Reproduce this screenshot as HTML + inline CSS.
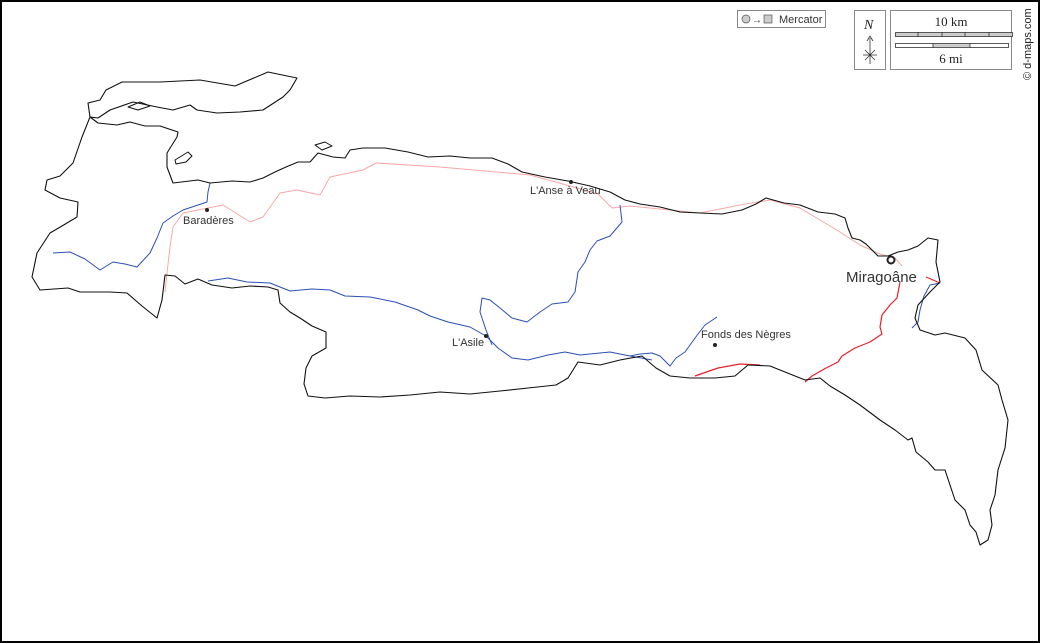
<!DOCTYPE html>
<html><head><meta charset="utf-8"><style>
html,body{margin:0;padding:0;background:#fff}
.f{position:relative;width:1036px;height:639px;border:2px solid #000;overflow:hidden;font-family:"Liberation Sans",sans-serif}
svg{position:absolute;left:-2px;top:-2px}
</style></head><body><div class="f">
<svg width="1040" height="643" viewBox="0 0 1040 643" xmlns="http://www.w3.org/2000/svg">
<g fill="none" stroke-linejoin="round">
<!-- pink road -->
<path stroke="#f8a8a8" stroke-width="1" d="M165,292 L167,273 L170,247 L173,227 L183,213 L213,207 L223,205 L250,222 L263,217 L280,193 L297,190 L320,195 L330,177 L363,170 L376,163 L440,167 L530,175 L570,186 L598,194 L612,208 L630,206 L660,209 L700,213 L740,205 L770,200 L800,208 L820,220 L840,232 L860,245 L880,254 L895,258 L902,266"/>
<!-- red road -->
<path stroke="#e8202a" stroke-width="1.2" d="M940,283 L926,277 M900,282 L897,298 L890,305 L882,315 L880,327 L882,334 L870,342 L855,348 L842,356 L838,362 L826,368 L812,376 L805,382 M695,376 L718,368 L740,364 L760,365"/>
<!-- rivers -->
<path stroke="#2b4fb8" stroke-width="1" d="M53,253 L70,252 L85,259 L100,270 L113,262 L125,264 L137,267 L150,253 L157,238 L163,223 L173,216 L183,210 L198,205 L207,202 L208,192 L210,183"/>
<path stroke="#2b4fb8" stroke-width="1" d="M208,281 L228,278 L247,282 L270,283 L290,291 L312,289 L330,290 L345,296 L370,297 L395,302 L418,310 L430,316 L448,322 L470,327 L486,336 L498,348 L512,358 L528,360 L548,355 L565,352 L580,355 L610,352 L630,356 L652,360"/>
<path stroke="#2b4fb8" stroke-width="1" d="M620,205 L622,222 L610,236 L597,241 L590,250 L585,262 L578,272 L575,292 L568,302 L552,304 L540,312 L527,322 L512,318 L500,308 L490,300 L482,298 L480,312 L486,330 L492,345"/>
<path stroke="#2b4fb8" stroke-width="1" d="M717,317 L705,325 L698,334 L690,345 L685,352 L676,358 L670,366 L660,356 L652,353 L640,354 L630,356"/>
<path stroke="#2b4fb8" stroke-width="1" d="M940,283 L930,285 L924,296 L920,310 L918,322 L912,328"/>
<!-- coastline -->
<path stroke="#111" stroke-width="1.1" d="M88,103 L100,100 L106,90 L122,82 L160,82 L200,80 L235,86 L268,72 L292,77 L297,78 L290,90 L283,97 L263,110 L240,112 L217,113 L197,110 L190,105 L173,110 L157,107 L133,102 L110,110 L98,118 L90,117 L82,137 L73,163 L60,176 L47,180 L45,190 L60,198 L78,202 L77,217 L62,226 L50,233 L37,253 L32,277 L40,290 L68,288 L80,292 L110,292 L127,293 L142,306 L157,318 L162,300 L165,275 L175,276 L185,284 L198,279 L212,285 L232,288 L250,286 L268,287 L278,290 L280,303 L290,312 L300,318 L312,326 L326,332 L326,348 L312,356 L306,368 L304,384 L308,396 L325,398 L350,396 L380,397 L410,395 L440,392 L470,394 L500,391 L528,388 L556,385 L568,378 L578,362 L600,365 L620,360 L642,356 L656,368 L670,376 L690,378 L715,378 L735,376 L748,365 L770,366 L790,374 L805,380 L820,378 L830,386 L845,395 L860,405 L880,420 L895,430 L908,440 L912,438 L916,452 L928,462 L935,470 L945,470 L950,485 L955,500 L965,510 L970,525 L976,532 L980,545 L988,540 L992,525 L990,510 L995,495 L998,470 L1005,448 L1008,420 L1002,400 L998,385 L982,370 L976,350 L965,338 L945,333 L935,335 L920,330 L915,318 L918,305 L930,292 L940,282 L936,262 L938,240 L928,238 L918,246 L908,250 L898,252 L888,256 L878,256 L872,250 L866,244 L860,240 L852,238 L848,228 L845,218 L835,214 L818,212 L800,205 L784,203 L766,198 L756,204 L742,210 L722,214 L700,213 L680,212 L660,207 L640,204 L625,200 L610,192 L590,186 L568,181 L545,177 L522,172 L508,164 L492,158 L470,158 L450,156 L428,157 L408,152 L385,148 L363,148 L350,150 L345,158 L333,157 L318,153 L310,162 L298,162 L286,167 L275,172 L263,178 L250,182 L232,181 L210,183 L198,180 L173,183 L167,167 L167,153 L177,137 L178,132 L160,126 L145,126 L130,122 L117,125 L98,123 L90,117 Z"/>
<path stroke="#111" stroke-width="1" d="M175,160 L188,152 L192,156 L186,162 L176,164 Z M315,145 L325,142 L332,146 L322,150 Z M128,107 L140,102 L150,106 L138,110 Z"/>
</g>
<!-- towns -->
<g fill="#222">
<circle cx="207" cy="210" r="2"/><circle cx="571" cy="182" r="2"/><circle cx="486" cy="336" r="2"/><circle cx="715" cy="345" r="2"/>
</g>
<circle cx="891" cy="260" r="3.5" fill="#fff" stroke="#222" stroke-width="2"/>
<g fill="#333" font-family="Liberation Sans,sans-serif" font-size="11">
<text x="183" y="224">Baradères</text>
<text x="530" y="194">L'Anse à Veau</text>
<text x="452" y="346">L'Asile</text>
<text x="701" y="338">Fonds des Nègres</text>
<text x="846" y="282" font-size="15">Miragoâne</text>
</g>
<!-- legend -->
<rect x="737.5" y="10.5" width="88" height="17" fill="#fff" stroke="#888"/>
<circle cx="746" cy="19" r="4" fill="#ccc" stroke="#555" stroke-width="0.7"/>
<text x="752" y="23" font-size="10" fill="#333" font-family="Liberation Sans,sans-serif">→</text>
<rect x="764" y="15" width="8" height="8" fill="#ccc" stroke="#555" stroke-width="0.7"/>
<text x="779" y="23" font-size="11" fill="#333" font-family="Liberation Sans,sans-serif">Mercator</text>
<rect x="854.5" y="10.5" width="31" height="59" fill="#fff" stroke="#888"/>
<text x="864" y="29" font-size="14" font-style="italic" fill="#222" font-family="Liberation Serif,serif">N</text>
<path d="M870,38 L870,64 M867,41 L870,36 L873,41 M863,55 L877,55 M865,50 L875,60 M865,60 L875,50" stroke="#333" stroke-width="0.8" fill="none"/>
<rect x="890.5" y="10.5" width="121" height="59" fill="#fff" stroke="#888"/>
<text x="951" y="26" text-anchor="middle" font-size="13" fill="#222" font-family="Liberation Serif,serif">10 km</text>
<rect x="895.5" y="32.5" width="117" height="4" fill="#ccc" stroke="#333" stroke-width="0.8"/>
<path d="M918,32 v5 M942,32 v5 M965,32 v5 M989,32 v5" stroke="#333" stroke-width="0.8"/>
<rect x="895.5" y="43.5" width="113" height="4" fill="#fff" stroke="#333" stroke-width="0.8"/>
<rect x="933" y="44" width="37" height="3" fill="#ccc"/>
<path d="M933,43 v5 M970,43 v5" stroke="#333" stroke-width="0.8"/>
<text x="951" y="63" text-anchor="middle" font-size="13" fill="#222" font-family="Liberation Serif,serif">6 mi</text>
<text transform="translate(1031,80) rotate(-90)" font-size="11" fill="#222" font-family="Liberation Sans,sans-serif">© d-maps.com</text>
</svg>
</div></body></html>
